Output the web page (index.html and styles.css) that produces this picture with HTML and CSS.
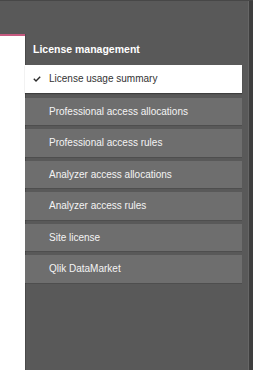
FILE: index.html
```html
<!DOCTYPE html>
<html lang="en">
<head>
    <meta charset="UTF-8">
    <meta name="viewport" content="width=device-width, initial-scale=1.0">
    <title>License management</title>
    <link rel="stylesheet" href="styles.css">
</head>
<body>
    <div class="page">
        <div class="content"></div>

        <div class="panel">
            <h2 class="panel-title">License management</h2>
            <div class="menu">
                <div class="item active">
                    <svg class="check" width="8" height="6" viewBox="0 0 8 6">
                        <path d="M0.8 2.8 L3 4.9 L7.2 0.7" fill="none" stroke="#2a2a2a" stroke-width="1.4"/>
                    </svg>
                    License usage summary
                </div>
                <div class="item">Professional access allocations</div>
                <div class="item">Professional access rules</div>
                <div class="item">Analyzer access allocations</div>
                <div class="item">Analyzer access rules</div>
                <div class="item">Site license</div>
                <div class="item">Qlik DataMarket</div>
            </div>
        </div>

        <div class="edge"></div>
    </div>
</body>
</html>
```

FILE: styles.css
```css
body {
    margin: 0;
    background-color: #595959;
    font-family: 'Liberation Sans', Arial, sans-serif;
}
.page {
    display: flex;
    height: 370px;
    border-top: 1px solid #474747;
    box-sizing: border-box;
}
.content {
    width: 25px;
    margin-top: 33px;
    border-top: 2px solid #c65a80;
    background: white;
    box-shadow: 1px 0 0 #4a4a4a;
}
.panel {
    flex: 1;
}
.panel-title {
    margin: 41px 0 0 8px;
    font-size: 10.5px;
    line-height: 14px;
    font-weight: bold;
    color: white;
}
.menu {
    margin-top: 9px;
    margin-right: 6px;
    display: flex;
    flex-direction: column;
    gap: 4px;
}
.item {
    height: 27.5px;
    display: flex;
    align-items: center;
    padding-left: 24px;
    background-color: #6e6e6e;
    color: #f4f4f4;
    font-size: 10px;
    box-shadow: 0 1px 0 rgba(0, 0, 0, 0.12);
}
.item.active {
    position: relative;
    margin-bottom: 1px;
    background-color: white;
    color: #333;
    box-shadow: 0 1px 1px rgba(0, 0, 0, 0.3);
}
.check {
    position: absolute;
    left: 8px;
    top: 11px;
}
.edge {
    width: 4px;
    background-color: #3e3e3e;
    border-left: 1px solid #666;
}
```
